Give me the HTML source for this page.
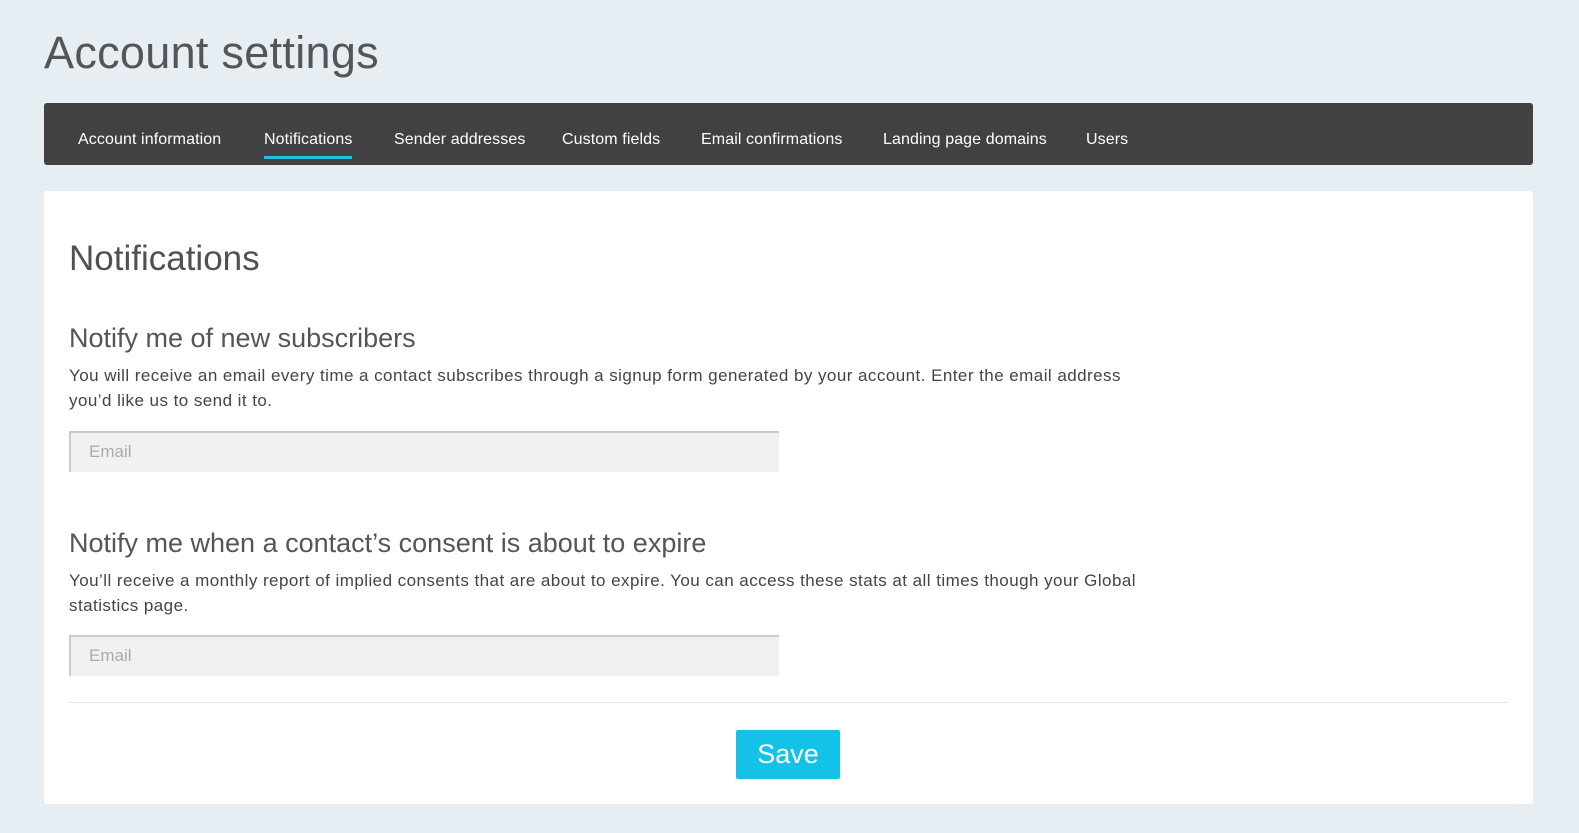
<!DOCTYPE html>
<html><head><style>
body{margin:0;background:#e6edf3;font-family:"Liberation Sans",sans-serif;width:1579px;height:833px;overflow:hidden;position:relative}
h1{position:absolute;left:44px;top:27px;margin:0;font-weight:normal;font-size:45px;color:#555;letter-spacing:0.3px}
.nav{position:absolute;left:44px;top:103px;width:1489px;height:62px;background:#414143;border-radius:3px}
.nav span{position:absolute;top:28px;color:#fff;font-size:16px;letter-spacing:0.1px}
.nav .act{border-bottom:3px solid #1ec0e6;padding-bottom:7px}
.card{position:absolute;left:44px;top:191px;width:1489px;height:613px;background:#fff;border-radius:3px}
.card *{position:absolute;margin:0;font-weight:normal}
h2{left:25px;top:48px;font-size:35px;color:#505050}
h3{left:25px;font-size:27px;color:#555}
p{left:25px;width:1100px;font-size:17px;line-height:25px;color:#444;letter-spacing:0.45px}
.in{left:25px;width:708px;height:39px;background:#f1f1f1;border-top:2px solid #ccc;border-left:2px solid #ccc;color:#aaa;font-size:17px;line-height:38px;text-indent:18px}
.hr{left:25px;top:511px;width:1440px;height:1px;background:#e5e5e5}
.btn{left:692px;top:539px;width:104px;height:49px;background:#13c2e6;color:#fff;font-size:27px;line-height:49px;text-align:center;border-radius:2px}
</style></head><body>
<h1>Account settings</h1>
<div class="nav">
<span style="left:34px">Account information</span>
<span class="act" style="left:220px">Notifications</span>
<span style="left:350px">Sender addresses</span>
<span style="left:518px">Custom fields</span>
<span style="left:657px">Email confirmations</span>
<span style="left:839px">Landing page domains</span>
<span style="left:1042px">Users</span>
</div>
<div class="card">
<h2>Notifications</h2>
<h3 style="top:132px">Notify me of new subscribers</h3>
<p style="top:172px">You will receive an email every time a contact subscribes through a signup form generated by your account. Enter the email address you’d like us to send it to.</p>
<div class="in" style="top:240px">Email</div>
<h3 style="top:337px">Notify me when a contact’s consent is about to expire</h3>
<p style="top:377px">You’ll receive a monthly report of implied consents that are about to expire. You can access these stats at all times though your Global statistics page.</p>
<div class="in" style="top:444px">Email</div>
<div class="hr"></div>
<div class="btn">Save</div>
</div>
</body></html>
